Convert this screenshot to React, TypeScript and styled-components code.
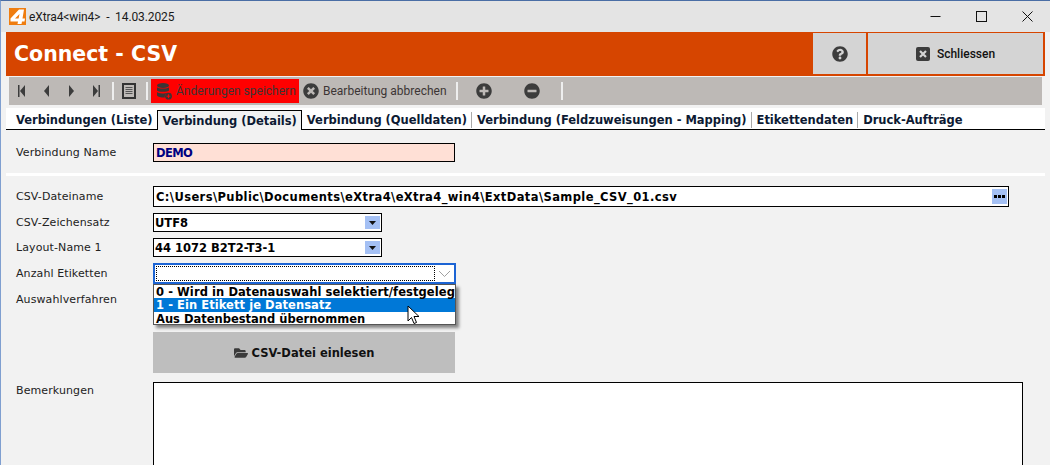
import React from 'react';
import styled, { createGlobalStyle } from 'styled-components';
import { FaFolderOpen, FaQuestionCircle, FaTimesCircle, FaPlusCircle, FaMinusCircle } from 'react-icons/fa';

const GlobalStyle = createGlobalStyle`
  html, body { margin: 0; padding: 0; overflow: hidden; background: #f2f2f2; }
  * { box-sizing: border-box; }
`;

const Window = styled.div`
  width: 1050px;
  height: 465px;
  overflow: hidden;
  display: flex;
  flex-direction: column;
  background: #f2f2f2;
  border-top: 1px solid #4a6ea5;
  border-left: 1px solid #7f9fd0;
  font-family: 'DejaVu Sans', Verdana, sans-serif;
`;

const TitleBar = styled.div`
  height: 31px;
  flex-shrink: 0;
  display: flex;
  align-items: center;
  background: #e4e4e4;
  padding-left: 8px;
  font-family: Roboto, 'Noto Sans', sans-serif;
  font-size: 12px;
  color: #1a1a1a;
`;

const LogoBox = styled.svg`
  width: 17px;
  height: 17px;
  margin-right: 3px;
`;

const TitleText = styled.span`
  flex: 1;
  white-space: pre;
  letter-spacing: -0.1px;
`;

const WinControls = styled.div`
  display: flex;
  align-items: center;
  height: 100%;
`;

const WinButton = styled.div`
  width: 46px;
  height: 100%;
  display: flex;
  align-items: center;
  justify-content: center;
`;

const Content = styled.div`
  flex: 1;
  display: flex;
  flex-direction: column;
  padding: 0 5px;
  min-height: 0;
`;

const Header = styled.div`
  height: 44px;
  flex-shrink: 0;
  display: flex;
  align-items: stretch;
  gap: 2px;
  background: #d64500;
  padding: 1px 2px 2px;
`;

const HeaderTitle = styled.div`
  flex: 1;
  color: #fff;
  font-weight: bold;
  font-size: 20.5px;
  line-height: 43px;
  padding-left: 6px;
`;

const HeaderButton = styled.div<{ $w: number }>`
  width: ${p => p.$w}px;
  background: #d4d4d4;
  display: flex;
  align-items: center;
  justify-content: center;
  gap: 7px;
  font-family: Roboto, 'Noto Sans', sans-serif;
  font-size: 12px;
  font-weight: 500;
  color: #111;
`;

const CloseGlyph = styled.span`
  width: 14px;
  height: 14px;
  border-radius: 2px;
  background: #3c3c3c;
  display: flex;
  align-items: center;
  justify-content: center;
`;

const Toolbar = styled.div`
  height: 28px;
  flex-shrink: 0;
  margin: 1px 3px 0 3px;
  display: flex;
  align-items: center;
  background: #bdb9b6;
  font-family: Roboto, 'Noto Sans', sans-serif;
  font-size: 12px;
  color: #3c3535;
  svg { flex-shrink: 0; }
`;

const NavButton = styled.div`
  width: 25px;
  height: 100%;
  display: flex;
  align-items: center;
  justify-content: center;
  color: #3c3c3c;
`;

const ToolDivider = styled.div<{ $ml?: number; $mr?: number }>`
  width: 2px;
  height: 18px;
  flex-shrink: 0;
  background: #eeeeee;
  margin-left: ${p => p.$ml ?? 0}px;
  margin-right: ${p => p.$mr ?? 0}px;
`;

const SaveButton = styled.div`
  width: 148px;
  height: 24px;
  margin-left: 3px;
  flex-shrink: 0;
  display: flex;
  align-items: center;
  gap: 4px;
  padding-left: 6px;
  background: #ff0000;
  white-space: nowrap;
`;

const CancelButton = styled.div`
  display: flex;
  align-items: center;
  gap: 4px;
  margin-left: 4px;
  width: 153px;
  flex-shrink: 0;
  white-space: nowrap;
`;

const RoundButton = styled.div<{ $ml?: number }>`
  width: 48px;
  margin-left: ${p => p.$ml ?? 0}px;
  display: flex;
  align-items: center;
  justify-content: center;
  color: #3c3c3c;
`;

const Tabs = styled.div`
  height: 22px;
  flex-shrink: 0;
  margin-top: 3px;
  padding-left: 5px;
  display: flex;
  align-items: flex-end;
  background: #fff;
  border-bottom: 1px solid #000;
  font-size: 11.5px;
  font-weight: bold;
  letter-spacing: -0.02px;
  color: #0d1a33;
`;

const Tab = styled.div<{ $active?: boolean; $sep?: boolean }>`
  height: 20px;
  line-height: 22px;
  padding: 0 5px;
  white-space: nowrap;
  ${p => p.$active && `
    border: 1px solid #000;
    border-bottom: none;
    background: #f2f2f2;
    margin-bottom: -1px;
    height: 20px;
    padding: 0 4px;
    line-height: 20px;
  `}
  ${p => p.$sep && `
    position: relative;
    &::after {
      content: '';
      position: absolute;
      right: 0;
      top: 3px;
      bottom: 1px;
      width: 1px;
      background: #aaa;
    }
  `}
`;

const Form = styled.div`
  flex: 1;
  position: relative;
  padding: 13px 0 0 10px;
  font-size: 11px;
  color: #222;
`;

const Row = styled.div<{ $mt?: number; $top?: boolean }>`
  display: grid;
  grid-template-columns: 137px 1fr;
  align-items: ${p => (p.$top ? 'start' : 'center')};
  margin-top: ${p => p.$mt ?? 0}px;
`;

const Label = styled.div<{ $mt?: number }>`
  font-size: 11px;
  letter-spacing: 0.1px;
  margin-top: ${p => p.$mt ?? 0}px;
`;

const Field = styled.div<{ $w: number; $h: number; $bg?: string; $color?: string; $ls?: number; $pl?: number }>`
  width: ${p => p.$w}px;
  height: ${p => p.$h}px;
  border: 1px solid #000;
  background: ${p => p.$bg ?? '#fff'};
  color: ${p => p.$color ?? '#000'};
  font-size: 11.5px;
  font-weight: bold;
  letter-spacing: ${p => p.$ls ?? 0}px;
  display: flex;
  align-items: center;
  justify-content: space-between;
  padding: 2px 1px 2px ${p => p.$pl ?? 1}px;
  white-space: nowrap;
`;

const BlueButton = styled.div<{ $w: number }>`
  width: ${p => p.$w}px;
  height: 100%;
  background: #a4c0f4;
  display: flex;
  align-items: center;
  justify-content: center;
  flex-shrink: 0;
`;

const Separator = styled.div`
  height: 3px;
  background: #fff;
  margin: 11px 0 10px -10px;
`;

const FocusedCombo = styled.div`
  width: 303px;
  height: 21px;
  border: 2px solid #1c64d4;
  background: #fff;
  display: flex;
  align-items: center;
  padding: 0 1px;
`;

const FocusInner = styled.div`
  flex: 1;
  height: 15px;
  border: 1px dotted #000;
`;

const ChevronBox = styled.svg`
  width: 17px;
  height: 10px;
  margin-left: 1px;
`;

const Spacer = styled.div`
  height: 15px;
`;

const Dropdown = styled.div`
  position: absolute;
  left: 147px;
  top: 154px;
  width: 303px;
  height: 41px;
  border: 1px solid #555;
  background: #fff;
  box-shadow: 3px 3px 3px rgba(0, 0, 0, 0.45);
  font-size: 11.5px;
  font-weight: bold;
  color: #000;
  overflow: hidden;
  z-index: 2;
`;

const Option = styled.div<{ $selected?: boolean; $ls?: number }>`
  height: 13.33px;
  line-height: 15px;
  padding-left: 2px;
  white-space: nowrap;
  letter-spacing: ${p => p.$ls ?? 0}px;
  background: ${p => (p.$selected ? '#0078d7' : 'transparent')};
  color: ${p => (p.$selected ? '#fff' : '#000')};
`;

const Cursor = styled.svg`
  position: absolute;
  left: 401px;
  top: 175px;
  width: 13px;
  height: 20px;
  z-index: 3;
`;

const ReadButton = styled.div`
  width: 302px;
  height: 41px;
  background: #bebebe;
  display: flex;
  align-items: center;
  justify-content: center;
  gap: 4px;
  font-size: 11.5px;
  font-weight: bold;
  color: #111;
`;

const NotesBox = styled.div`
  width: 870px;
  height: 120px;
  border: 1px solid #000;
  background: #fff;
`;

const Arrow = () => (
  <svg width="7" height="4" viewBox="0 0 7 4"><path d="M0 0h7L3.5 4z" fill="#111" /></svg>
);

// record navigation glyphs: d is drawn in a 7x12 box
const NavGlyph = ({ d }: { d: string }) => (
  <svg width="7" height="12" viewBox="0 0 7 12"><path d={d} fill="#3c3c3c" /></svg>
);

export default function App() {
  return (
    <>
      <GlobalStyle />
      <Window>
        <TitleBar>
          <LogoBox viewBox="0 0 17 17">
            <rect width="17" height="17" fill="#ef7d10" />
            <path d="M10 1.5 L1.5 10.5 V13.5 H9 L8.5 16 H12.5 L13 13.5 H15.5 L16 10.5 H13.5 L15 1.5 Z M10.5 6 L9.6 10.5 H6 Z" fill="#fff" fillRule="evenodd" />
          </LogoBox>
          <TitleText>{'eXtra4<win4>  -  14.03.2025'}</TitleText>
          <WinControls>
            <WinButton>
              <svg width="11" height="11" viewBox="0 0 11 11"><path d="M0.5 5.5h10" stroke="#111" /></svg>
            </WinButton>
            <WinButton>
              <svg width="11" height="11" viewBox="0 0 11 11"><rect x="0.5" y="0.5" width="10" height="10" fill="none" stroke="#111" /></svg>
            </WinButton>
            <WinButton>
              <svg width="11" height="11" viewBox="0 0 11 11"><path d="M0.5 0.5l10 10M10.5 0.5l-10 10" stroke="#111" /></svg>
            </WinButton>
          </WinControls>
        </TitleBar>
        <Content>
          <Header>
            <HeaderTitle>Connect - CSV</HeaderTitle>
            <HeaderButton $w={53}><FaQuestionCircle size={16} color="#3c3c3c" /></HeaderButton>
            <HeaderButton $w={175}>
              <CloseGlyph>
                <svg width="8" height="8" viewBox="0 0 8 8"><path d="M1 1l6 6M7 1l-6 6" stroke="#d4d4d4" strokeWidth="2.2" /></svg>
              </CloseGlyph>
              Schliessen
            </HeaderButton>
          </Header>
          <Toolbar>
            <NavButton><NavGlyph d="M0 0h1.5v12H0zM7 0v12L2 6z" /></NavButton>
            <NavButton><NavGlyph d="M6 0v12L1 6z" /></NavButton>
            <NavButton><NavGlyph d="M1 0v12L6 6z" /></NavButton>
            <NavButton><NavGlyph d="M5.5 0H7v12H5.5zM0 0v12L5 6z" /></NavButton>
            <ToolDivider $ml={3} $mr={8} />
            <svg width="14" height="16" viewBox="0 0 14 16">
              <rect x="1" y="1" width="12" height="14" fill="none" stroke="#333" strokeWidth="2" />
              <path d="M3.5 4.5h7M3.5 6.5h7M3.5 8.5h7M3.5 10.5h7" stroke="#555" strokeWidth="1" />
            </svg>
            <ToolDivider $ml={10} />
            <SaveButton>
              <svg width="15" height="17" viewBox="0 0 15 17">
                <ellipse cx="6" cy="2.5" rx="6" ry="2.5" fill="#3c3535" />
                <path d="M0 4.2C1 6 11 6 12 4.2V7.4C11 9.2 1 9.2 0 7.4zM0 9C1 10.8 8 10.8 11 9.4C8 10.5 7.5 12.5 7.8 14.4C5 14.6 1 14 0 12.4z" fill="#3c3535" />
                <circle cx="11.5" cy="13.2" r="3.4" fill="#3c3535" />
                <path d="M9.6 13.2h3.8M11.5 11.3v3.8" stroke="#ff0000" strokeWidth="1" />
              </svg>
              Änderungen speichern
            </SaveButton>
            <CancelButton><FaTimesCircle size={16} color="#3c3c3c" />Bearbeitung abbrechen</CancelButton>
            <ToolDivider />
            <RoundButton $ml={2}><FaPlusCircle size={16} /></RoundButton>
            <RoundButton><FaMinusCircle size={16} /></RoundButton>
            <ToolDivider $ml={5} />
          </Toolbar>
          <Tabs>
            <Tab>Verbindungen (Liste)</Tab>
            <Tab $active>Verbindung (Details)</Tab>
            <Tab $sep>Verbindung (Quelldaten)</Tab>
            <Tab $sep>Verbindung (Feldzuweisungen - Mapping)</Tab>
            <Tab $sep>Etikettendaten</Tab>
            <Tab>Druck-Aufträge</Tab>
          </Tabs>
          <Form>
            <Row>
              <Label>Verbindung Name</Label>
              <Field $w={302} $h={19} $bg="#ffe0d6" $color="#000080" $ls={-0.6} $pl={2}>DEMO</Field>
            </Row>
            <Separator />
            <Row>
              <Label>CSV-Dateiname</Label>
              <Field $w={856} $h={21} $ls={0.4} $pl={2}>
                C:\Users\Public\Documents\eXtra4\eXtra4_win4\ExtData\Sample_CSV_01.csv
                <BlueButton $w={15}>
                  <svg width="11" height="3" viewBox="0 0 11 3"><path d="M0 0h3v3H0zM4 0h3v3H4zM8 0h3v3H8z" fill="#000" /></svg>
                </BlueButton>
              </Field>
            </Row>
            <Row $mt={6}>
              <Label>CSV-Zeichensatz</Label>
              <Field $w={229} $h={19}>
                UTF8
                <BlueButton $w={15}><Arrow /></BlueButton>
              </Field>
            </Row>
            <Row $mt={6}>
              <Label>Layout-Name 1</Label>
              <Field $w={229} $h={19}>
                44 1072 B2T2-T3-1
                <BlueButton $w={15}><Arrow /></BlueButton>
              </Field>
            </Row>
            <Row $mt={6}>
              <Label>Anzahl Etiketten</Label>
              <FocusedCombo>
                <FocusInner />
                <ChevronBox viewBox="0 0 17 10"><path d="M3 2l5.5 5.5L14 2" fill="none" stroke="#a0a0a0" /></ChevronBox>
              </FocusedCombo>
            </Row>
            <Row $mt={8}>
              <Label>Auswahlverfahren</Label>
              <Spacer />
            </Row>
            <Row $mt={25}>
              <span />
              <ReadButton><FaFolderOpen size={14} color="#3a3a3a" />CSV-Datei einlesen</ReadButton>
            </Row>
            <Row $mt={9} $top>
              <Label $mt={2}>Bemerkungen</Label>
              <NotesBox />
            </Row>
            <Dropdown>
              <Option $ls={0.08}>0 - Wird in Datenauswahl selektiert/festgelegt</Option>
              <Option $selected $ls={0.06}>1 - Ein Etikett je Datensatz</Option>
              <Option>Aus Datenbestand übernommen</Option>
            </Dropdown>
            <Cursor viewBox="0 0 13 20">
              <path d="M1 1v15l3.5-3.5 2.5 6 2.5-1-2.5-6H12z" fill="#fff" stroke="#000" strokeWidth="1" />
            </Cursor>
          </Form>
        </Content>
      </Window>
    </>
  );
}
